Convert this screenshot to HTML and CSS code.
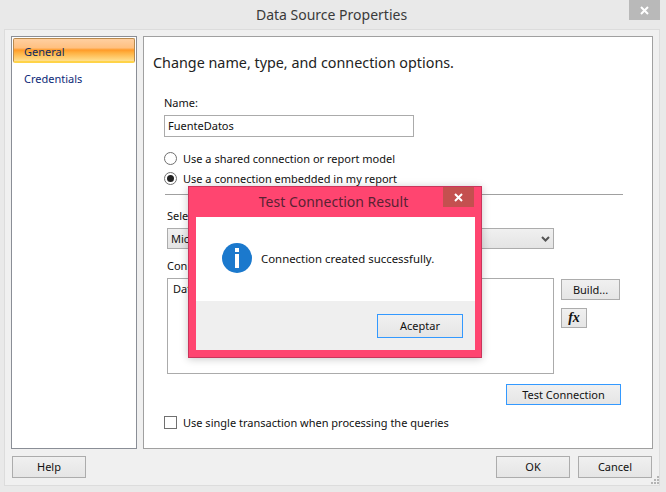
FILE: index.html
```html
<!DOCTYPE html>
<html lang="en">
<head>
    <meta charset="UTF-8">
    <meta name="viewport" content="width=device-width, initial-scale=1.0">
    <title>Data Source Properties</title>
    <link rel="stylesheet" href="styles.css">
</head>
<body>
    <div class="window">
        <header class="titlebar">
            <span class="titlebar-text">Data Source Properties</span>
            <span class="titlebar-close">
                <svg width="9" height="9" viewBox="0 0 9 9"><path d="M1 1L8 8M8 1L1 8" stroke="#fff" stroke-width="2"/></svg>
            </span>
        </header>

        <div class="frame">
            <div class="panes">
                <nav class="side-list">
                    <div class="side-item selected">General</div>
                    <div class="side-item">Credentials</div>
                </nav>

                <main class="main-pane">
                    <h1 class="pane-title">Change name, type, and connection options.</h1>

                    <section class="name-block">
                        <label class="field-label">Name:</label>
                        <div class="text-input">FuenteDatos</div>
                    </section>

                    <section class="radio-block">
                        <div class="check-row"><span class="radio"></span>Use a shared connection or report model</div>
                        <div class="check-row"><span class="radio checked"></span>Use a connection embedded in my report</div>
                    </section>

                    <hr class="divider">

                    <section class="embedded-block">
                        <label class="field-label">Select connection type:</label>
                        <div class="select-box">
                            <span>Microsoft SQL Server</span>
                            <svg width="9" height="6" viewBox="0 0 9 6"><path d="M1 1L4.5 4.5L8 1" fill="none" stroke="#555" stroke-width="2"/></svg>
                        </div>
                        <label class="field-label conn-label">Connection string:</label>
                        <div class="conn-row">
                            <div class="conn-text">Data Source=.;Initial Catalog=Ventas</div>
                            <div class="conn-buttons">
                                <button class="btn build-btn">Build...</button>
                                <button class="btn fx-btn"><i>fx</i></button>
                            </div>
                        </div>
                        <div class="test-row">
                            <button class="btn focused test-btn">Test Connection</button>
                        </div>
                    </section>

                    <div class="check-row single-row"><span class="checkbox"></span>Use single transaction when processing the queries</div>
                </main>
            </div>

            <footer class="footer">
                <button class="btn foot-btn">Help</button>
                <div class="footer-right">
                    <button class="btn foot-btn">OK</button>
                    <button class="btn foot-btn">Cancel</button>
                </div>
            </footer>

            <svg class="grip" width="10" height="10" viewBox="0 0 10 10" fill="#b4b4b4">
                <rect x="7" y="1" width="2" height="2"/>
                <rect x="4" y="4" width="2" height="2"/><rect x="7" y="4" width="2" height="2"/>
                <rect x="1" y="7" width="2" height="2"/><rect x="4" y="7" width="2" height="2"/><rect x="7" y="7" width="2" height="2"/>
            </svg>
        </div>
    </div>

    <!-- message box on top of the dialog -->
    <div class="msgbox">
        <div class="msgbox-title">
            <span>Test Connection Result</span>
            <span class="msgbox-close">
                <svg width="9" height="9" viewBox="0 0 9 9"><path d="M1 1L8 8M8 1L1 8" stroke="#fff" stroke-width="2"/></svg>
            </span>
        </div>
        <div class="msgbox-inner">
            <div class="msgbox-body">
                <svg width="30" height="30" viewBox="0 0 30 30">
                    <circle cx="15" cy="15" r="15" fill="#1b79cd"/>
                    <rect x="13" y="5" width="4" height="4" fill="#fff"/>
                    <rect x="13" y="11" width="4" height="14" fill="#fff"/>
                </svg>
                <span>Connection created successfully.</span>
            </div>
            <div class="msgbox-footer">
                <button class="btn focused accept-btn">Aceptar</button>
            </div>
        </div>
    </div>
</body>
</html>
```

FILE: styles.css
```css
* {
    box-sizing: border-box;
}
body {
    margin: 0;
    width: 666px;
    height: 492px;
    overflow: hidden;
    position: relative;
    background: #e9e9e9;
    font-family: "Noto Sans", "Open Sans", sans-serif;
    font-size: 11px;
    color: #111;
}
.window {
    height: 100%;
    display: flex;
    flex-direction: column;
}
.titlebar {
    height: 29px;
    flex: none;
    position: relative;
    padding-right: 3px;
    text-align: center;
    font-size: 14px;
    line-height: 30px;
    color: #3a3a3a;
}
.titlebar-close {
    position: absolute;
    top: 0;
    right: 6px;
    width: 31px;
    height: 20px;
    background: #b9b9b9;
    display: flex;
    align-items: center;
    justify-content: center;
}
.frame {
    flex: none;
    height: 457px;
    margin: 0 6px 0 4px;
    padding: 6px 6px 0 6px;
    background: #f0f0f0;
    border: 1px solid #dcdcdc;
    position: relative;
}
.panes {
    display: flex;
    gap: 6px;
    height: 413px;
}
.side-list {
    width: 126px;
    flex: none;
    padding: 1px;
    background: #fff;
    border: 1px solid #8a8e96;
}
.side-item {
    height: 25px;
    margin-bottom: 2px;
    padding-left: 11px;
    line-height: 28px;
    color: #0c2a78;
}
.side-item.selected {
    color: #0c2a60;
    border: 1px solid #b98a4e;
    border-bottom: 2px solid #ffd348;
    border-radius: 2px;
    padding-left: 10px;
    line-height: 26px;
    background: linear-gradient(#ffcfa0 0%, #ffc080 40%, #ff9a28 50%, #ffb040 62%, #ffe090 100%);
}
.main-pane {
    flex: 1;
    background: #fff;
    border: 1px solid #a0a0a0;
    padding: 0 0 0 20px;
}
.pane-title {
    margin: 16px 0 0 -11px;
    font-size: 14.35px;
    font-weight: 400;
    line-height: 20px;
    color: #222;
}
.field-label {
    display: block;
    line-height: 16px;
}
.name-block {
    margin-top: 22px;
}
.text-input {
    width: 250px;
    height: 22px;
    margin-top: 4px;
    padding-left: 3px;
    border: 1px solid #ababab;
    line-height: 20px;
}
.radio-block {
    margin-top: 13px;
    display: flex;
    flex-direction: column;
    gap: 4px;
}
.check-row {
    display: flex;
    align-items: center;
    gap: 6px;
    height: 16px;
}
.radio {
    width: 13px;
    height: 13px;
    border: 1px solid #707070;
    border-radius: 50%;
    background: #fff;
    display: flex;
    align-items: center;
    justify-content: center;
}
.radio.checked::after {
    content: "";
    width: 7px;
    height: 7px;
    border-radius: 50%;
    background: #222;
}
.checkbox {
    width: 13px;
    height: 13px;
    border: 1px solid #707070;
    background: #fff;
}
.divider {
    width: 458px;
    margin: 8px 0 0 1px;
    border: 0;
    border-top: 1px solid #a0a0a0;
}
.embedded-block {
    margin: 13px 0 0 3px;
}
.select-box {
    width: 387px;
    height: 21px;
    margin-top: 4px;
    padding: 0 3px 0 3px;
    display: flex;
    align-items: center;
    justify-content: space-between;
    border: 1px solid #acacac;
    background: linear-gradient(#f0f0f0, #e4e4e4);
}
.conn-label {
    margin-top: 9px;
}
.conn-row {
    margin-top: 4px;
    display: flex;
    gap: 7px;
}
.conn-text {
    width: 387px;
    height: 96px;
    padding: 2px 5px;
    border: 1px solid #ababab;
    line-height: 16px;
}
.conn-buttons {
    display: flex;
    flex-direction: column;
    align-items: flex-start;
    gap: 8px;
    padding-top: 1px;
}
.btn {
    padding: 0 0 1px;
    font: inherit;
    color: #111;
    border: 1px solid #acacac;
    background: linear-gradient(#f0f0f0, #e5e5e5);
}
.btn.focused {
    border-color: #3399ff;
}
.build-btn {
    width: 59px;
    height: 21px;
}
.fx-btn {
    width: 26px;
    height: 20px;
    font-family: "Liberation Serif", serif;
    font-size: 14px;
    font-weight: 700;
    line-height: 16px;
}
.test-row {
    margin-top: 10px;
    padding-left: 339px;
}
.test-btn {
    width: 115px;
    height: 21px;
}
.single-row {
    margin-top: 9px;
}
.footer {
    margin-top: 7px;
    padding: 0 1px;
    display: flex;
    justify-content: space-between;
}
.footer-right {
    display: flex;
    gap: 8px;
}
.foot-btn {
    width: 74px;
    height: 22px;
}
.grip {
    position: absolute;
    right: -1px;
    bottom: 0;
}
.msgbox {
    position: absolute;
    left: 188px;
    top: 186px;
    width: 294px;
    height: 172px;
    padding: 0 6px 7px 7px;
    background: #ff4570;
    border: 1px solid #c9355c;
    box-shadow: 0 1px 8px rgba(0, 0, 0, 0.22);
    display: flex;
    flex-direction: column;
}
.msgbox-title {
    height: 30px;
    flex: none;
    position: relative;
    padding-right: 4px;
    text-align: center;
    font-size: 14px;
    line-height: 30px;
    color: #5a2233;
}
.msgbox-close {
    position: absolute;
    top: 0;
    right: 1px;
    width: 31px;
    height: 20px;
    background: #c4504f;
    display: flex;
    align-items: center;
    justify-content: center;
}
.msgbox-inner {
    flex: 1;
    background: #fff;
    display: flex;
    flex-direction: column;
}
.msgbox-body {
    height: 84px;
    padding: 0 0 2px 26px;
    display: flex;
    align-items: center;
    gap: 9px;
    font-size: 11.4px;
}
.msgbox-footer {
    flex: 1;
    background: #efefef;
    padding: 13px 12px 0 0;
    display: flex;
    justify-content: flex-end;
    align-items: flex-start;
}
.accept-btn {
    width: 86px;
    height: 24px;
}
```
